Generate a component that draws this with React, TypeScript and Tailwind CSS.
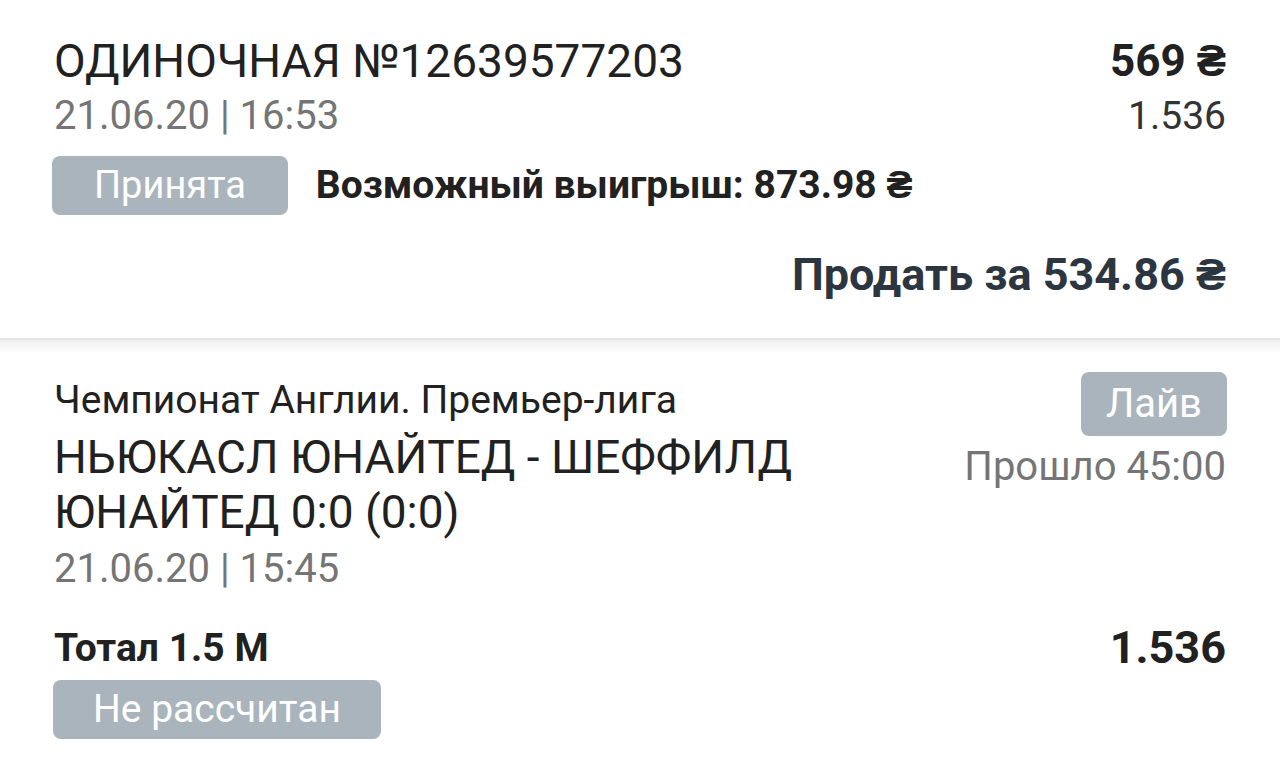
export default function App() {
    return (
        <div className="min-h-screen bg-white font-['Roboto',sans-serif] text-[#212121]">
            {/* купон */}
            <section className="h-[338px] px-[54px] pt-[33px]">
                <div className="flex justify-between">
                    <div>
                        <div className="text-[46px] leading-[56px]">ОДИНОЧНАЯ №12639577203</div>
                        <div className="mt-[3px] text-[40px] leading-[48px] text-[#757575]">21.06.20 | 16:53</div>
                    </div>
                    <div className="text-right">
                        <div className="text-[44px] leading-[56px] font-bold">569 ₴</div>
                        <div className="mt-[3px] text-[39px] leading-[48px] text-[#333]">1.536</div>
                    </div>
                </div>
                <div className="mt-[16px] -ml-[2px] flex items-center gap-[28px]">
                    <span className="flex h-[59px] items-center rounded-[8px] bg-[#aab4bd] px-[42px] text-[38px] text-white">Принята</span>
                    <span className="text-[39px] font-bold">Возможный выигрыш: 873.98 ₴</span>
                </div>
                <div className="mt-[34px] text-right text-[45px] leading-[52px] font-bold text-[#2b3640]">Продать за 534.86 ₴</div>
            </section>

            <div className="h-[2px] bg-[#e4e4e4]" />
            <div className="h-[14px] bg-gradient-to-b from-[#f0f0f0] to-white" />

            {/* событие */}
            <section className="px-[54px] pt-[18px]">
                <div className="flex justify-between gap-[20px]">
                    <div className="flex-1">
                        <div className="pt-[5px] text-[39px] leading-[46px]">Чемпионат Англии. Премьер-лига</div>
                        <div className="mt-[7px] text-[46px] leading-[55px]">НЬЮКАСЛ ЮНАЙТЕД - ШЕФФИЛД ЮНАЙТЕД 0:0 (0:0)</div>
                        <div className="mt-[4px] text-[40px] leading-[50px] text-[#757575]">21.06.20 | 15:45</div>
                    </div>
                    <div className="flex flex-col items-end">
                        <span className="-mr-[1px] flex h-[64px] items-center rounded-[8px] bg-[#aab4bd] px-[25px] text-[40px] text-white">Лайв</span>
                        <span className="mt-[3px] text-[40px] leading-[56px] text-[#757575]">Прошло 45:00</span>
                    </div>
                </div>
                <div className="mt-[30px] flex items-center justify-between">
                    <span className="text-[39px] leading-[48px] font-bold">Тотал 1.5 М</span>
                    <span className="text-[45px] leading-[48px] font-bold">1.536</span>
                </div>
                <div className="mt-[8px] -ml-[1px]">
                    <span className="inline-flex h-[59px] items-center rounded-[8px] bg-[#aab4bd] px-[40px] text-[39px] text-white">Не рассчитан</span>
                </div>
            </section>
        </div>
    );
}
